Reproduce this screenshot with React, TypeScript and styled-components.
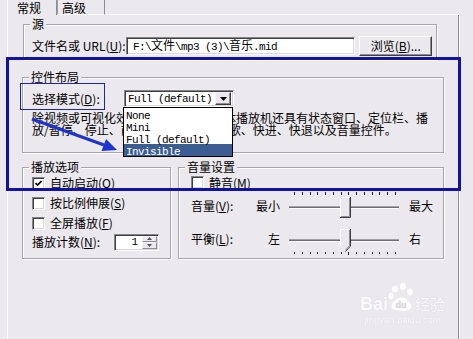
import React from "react";
import styled, { createGlobalStyle } from "styled-components";

const BG = "#ece9ee";

const GlobalStyle = createGlobalStyle`
  html, body {
    margin: 0;
    padding: 0;
    background: ${BG};
  }
  body {
    font-family: "Noto Sans CJK SC", "Liberation Sans", sans-serif;
    font-size: 12px;
    line-height: 12px;
    color: #000;
  }
`;

const Screen = styled.div`
  position: relative;
  width: 473px;
  height: 339px;
  overflow: hidden;
  background: ${BG};
`;

const TabStrip = styled.div`
  display: flex;
  width: 452px;
  height: 15px;
  margin-left: 7px;
`;

const Tab = styled.div<{ $active?: boolean }>`
  box-sizing: border-box;
  width: ${(p) => (p.$active ? 50 : 48)}px;
  height: 15px;
  padding: 1px 0 0 ${(p) => (p.$active ? 9 : 4)}px;
  line-height: 13px;
  border-left: 1px solid ${(p) => (p.$active ? "#fff" : "#9f9ea3")};
  border-right: 1px solid #8e8d92;
  border-bottom: ${(p) => (p.$active ? "none" : "1px solid #fff")};
`;

const TabFiller = styled.div`
  flex: 1;
  border-bottom: 1px solid #fff;
`;

const Panel = styled.div`
  box-sizing: border-box;
  width: 452px;
  height: 324px;
  margin-left: 7px;
  padding: 3px 0 0 14px;
  border-left: 1px solid #fff;
  border-right: 1px solid #8e8d92;
  box-shadow: 1px 0 0 #fff;
`;

const Group = styled.fieldset<{ $width: number; $pad: number; $top?: number; $shift?: number; $bottom: number }>`
  box-sizing: border-box;
  width: ${(p) => p.$width}px;
  min-inline-size: 0;
  margin: ${(p) => p.$top ?? 0}px 0 0 ${(p) => p.$shift ?? 0}px;
  padding: 0 4px ${(p) => p.$bottom}px ${(p) => p.$pad}px;
  border: 1px solid #a6a5ab;
  box-shadow: inset 1px 1px 0 #fff, 1px 1px 0 #fff;
`;

const Legend = styled.legend<{ $pad: number }>`
  margin-left: ${(p) => 6 - p.$pad}px;
  padding: 0 2px;
  line-height: 12px;
  background: ${BG};
`;

const FieldRow = styled.div`
  display: flex;
  align-items: center;
  height: 20px;
  margin-top: 6px;
`;

const FieldLabel = styled.span<{ $width: number }>`
  width: ${(p) => p.$width}px;
  flex: none;
  white-space: nowrap;
`;

const Sunken = styled.div`
  box-sizing: border-box;
  background: #fff;
  border: 1px solid;
  border-color: #86858a #fff #fff #86858a;
  box-shadow: inset 1px 1px 0 #3f3e42, inset -1px -1px 0 #d8d6da;
`;

const TextField = styled(Sunken)`
  width: 231px;
  height: 18px;
  display: flex;
  align-items: center;
  padding-left: 6px;
  white-space: nowrap;
`;

const Mono = styled.span`
  font-family: "Liberation Mono", "Noto Sans CJK SC", monospace;
  font-size: 11px;
  letter-spacing: -0.6px;
`;

const Wide = styled.span`
  font-family: "Noto Sans CJK SC", sans-serif;
  font-size: 12px;
  letter-spacing: 0;
`;

const PushButton = styled.div`
  box-sizing: border-box;
  width: 73px;
  height: 20px;
  margin-left: 4px;
  display: flex;
  align-items: center;
  justify-content: center;
  border: 1px solid;
  border-color: #fff #3f3e42 #3f3e42 #fff;
  box-shadow: inset -1px -1px 0 #8e8d92;
  white-space: nowrap;
`;

const SelectRow = styled.div`
  display: flex;
  align-items: center;
  height: 17px;
  margin-top: 7px;
`;

const Select = styled(Sunken)`
  position: relative;
  width: 110px;
  height: 17px;
  display: flex;
  align-items: center;
  justify-content: space-between;
  padding: 0 2px 0 3px;
`;

const ArrowButton = styled.div`
  box-sizing: border-box;
  width: 16px;
  height: 13px;
  display: flex;
  align-items: center;
  justify-content: center;
  background: ${BG};
  border: 1px solid;
  border-color: #f4f3f6 #3f3e42 #3f3e42 #f4f3f6;
  box-shadow: inset -1px -1px 0 #8e8d92;
`;

const DropList = styled.ul`
  position: absolute;
  z-index: 2;
  left: -2px;
  top: 16px;
  box-sizing: border-box;
  width: 110px;
  margin: 0;
  padding: 0;
  list-style: none;
  background: #fff;
  border: 1px solid #000;
`;

const DropItem = styled.li<{ $selected?: boolean }>`
  height: 12px;
  padding-left: 2px;
  line-height: 12px;
  background: ${(p) => (p.$selected ? "#3b5d92" : "#fff")};
  color: ${(p) => (p.$selected ? "#fff" : "#000")};
`;

const Description = styled.div`
  margin-top: 5px;
  white-space: nowrap;
`;

const BottomRow = styled.div`
  display: flex;
  gap: 7px;
  margin-top: 8px;
`;

const CheckRow = styled.div<{ $h?: number }>`
  display: flex;
  align-items: center;
  gap: 5px;
  height: ${(p) => p.$h ?? 20}px;
`;

const CheckBox = styled(Sunken)`
  width: 13px;
  height: 13px;
  flex: none;
  display: flex;
  align-items: center;
  justify-content: center;
`;

const SpinRow = styled.div`
  display: flex;
  align-items: center;
  height: 18px;
`;

const SpinBox = styled(Sunken)`
  width: 45px;
  height: 17px;
  display: flex;
  align-items: center;
  justify-content: flex-end;
  padding: 0 1px 0 0;
`;

const SpinValue = styled.span`
  margin-right: 4px;
  font-family: "Liberation Mono", monospace;
  font-size: 11px;
`;

const SpinButtons = styled.div`
  display: flex;
  flex-direction: column;
  width: 15px;
  height: 13px;
`;

const SpinHalf = styled.div`
  box-sizing: border-box;
  flex: 1;
  display: flex;
  align-items: center;
  justify-content: center;
  background: ${BG};
  border: 1px solid;
  border-color: #f4f3f6 #8e8d92 #8e8d92 #f4f3f6;
`;

const SliderRow = styled.div<{ $top?: number }>`
  display: flex;
  align-items: flex-start;
  margin-top: ${(p) => p.$top ?? 0}px;
`;

const SliderLabel = styled.span`
  width: 54px;
  margin-top: 8px;
  white-space: nowrap;
`;

const SliderMin = styled.span`
  width: 35px;
  margin: 8px 9px 0 0;
  text-align: right;
  white-space: nowrap;
`;

const SliderMax = styled.span`
  margin: 8px 0 0 10px;
  white-space: nowrap;
`;

const Track = styled.div<{ $h: number }>`
  position: relative;
  width: 110px;
  height: ${(p) => p.$h}px;
  display: flex;
  flex-direction: column;
`;

const Ticks = styled.div<{ $top: number }>`
  display: flex;
  justify-content: space-between;
  margin-top: ${(p) => p.$top}px;
  padding: 0 3px 0 5px;
`;

const Tick = styled.span<{ $h: number }>`
  width: 1px;
  height: ${(p) => p.$h}px;
  background: #1c1c1c;
`;

const Groove = styled.div<{ $top: number }>`
  height: 1px;
  margin-top: ${(p) => p.$top}px;
  background: #6f6e73;
  border-top: 1px solid #a3a2a7;
  border-bottom: 1px solid #fff;
`;

const Thumb = styled.svg<{ $left: number; $top: number }>`
  position: absolute;
  left: ${(p) => p.$left}px;
  top: ${(p) => p.$top}px;
`;

const Highlight = styled.div<{ $x: number; $y: number; $w: number; $h: number; $stroke: number; $color: string }>`
  position: absolute;
  left: ${(p) => p.$x}px;
  top: ${(p) => p.$y}px;
  width: ${(p) => p.$w}px;
  height: ${(p) => p.$h}px;
  box-sizing: border-box;
  border: ${(p) => p.$stroke}px solid ${(p) => p.$color};
  pointer-events: none;
`;

const ArrowLayer = styled.svg`
  position: absolute;
  left: 0;
  top: 0;
  pointer-events: none;
`;

const Watermark = styled.div`
  position: absolute;
  right: 28px;
  bottom: 13px;
  display: flex;
  flex-direction: column;
  align-items: center;
  color: rgba(255, 255, 255, 0.92);
  text-shadow: 0 0 1px rgba(120, 120, 130, 0.25);
  pointer-events: none;
`;

const MarkTop = styled.div`
  display: flex;
  align-items: flex-end;
  height: 30px;
`;

const MarkBai = styled.span`
  font-family: "Liberation Sans", sans-serif;
  font-weight: bold;
  font-size: 18px;
  line-height: 16px;
`;

const MarkJing = styled.span`
  font-size: 15px;
  line-height: 16px;
  margin-left: 1px;
`;

const MarkUrl = styled.span`
  font-family: "Liberation Sans", sans-serif;
  font-size: 9.5px;
  line-height: 12px;
  margin-top: 2px;
`;

const Check = () => (
  <svg width="7" height="7" viewBox="0 0 7 7">
    <path d="M0.5 3 L2.5 5 L6.5 1" stroke="#000" strokeWidth="1.6" fill="none" />
  </svg>
);

const Caret = ({ up }: { up?: boolean }) => (
  <svg width="7" height="4" viewBox="0 0 7 4">
    <path d={up ? "M3.5 0 L7 4 L0 4 Z" : "M0 0 L7 0 L3.5 4 Z"} fill="#000" />
  </svg>
);

const SmallCaret = ({ up }: { up?: boolean }) => (
  <svg width="5" height="3" viewBox="0 0 5 3">
    <path d={up ? "M2.5 0 L5 3 L0 3 Z" : "M0 0 L5 0 L2.5 3 Z"} fill="#555" />
  </svg>
);

const BoxThumb = () => (
  <Thumb $left={51} $top={5} width="11" height="21" viewBox="0 0 11 21">
    <rect x="0" y="0" width="11" height="21" fill={BG} />
    <path d="M0.5 20 V0.5 H10" stroke="#fff" fill="none" />
    <path d="M1 19.5 H9.5 V1" stroke="#8e8d92" fill="none" />
    <path d="M0 20.5 H10.5 V0" stroke="#3f3e42" fill="none" />
  </Thumb>
);

const PointThumb = () => (
  <Thumb $left={51} $top={4} width="11" height="23" viewBox="0 0 11 23">
    <path d="M0 0 H11 V17 L5.5 22.5 L0 17 Z" fill={BG} />
    <path d="M0.5 17 V0.5 H10" stroke="#fff" fill="none" />
    <path d="M10.5 0 V17 L5.5 22.5" stroke="#3f3e42" fill="none" />
    <path d="M9.5 1 V16.6 L5.5 21" stroke="#8e8d92" fill="none" />
  </Thumb>
);

const Paw = () => (
  <svg width="26" height="30" viewBox="0 0 26 30">
    <ellipse cx="7" cy="7" rx="3" ry="3.6" fill="rgba(255,255,255,0.92)" />
    <ellipse cx="15" cy="4.5" rx="3" ry="3.6" fill="rgba(255,255,255,0.92)" />
    <ellipse cx="22" cy="10" rx="2.8" ry="3.3" fill="rgba(255,255,255,0.92)" />
    <ellipse cx="3" cy="14" rx="2.6" ry="3.2" fill="rgba(255,255,255,0.92)" />
    <path d="M5 27 C2 25 4 19 9 17 C12 15 16 15 19 18 C24 21 25 27 20 28 C15 29 10 29 5 27 Z" fill="rgba(255,255,255,0.92)" />
    <text x="13" y="26" textAnchor="middle" fontFamily="Liberation Sans, sans-serif" fontWeight="bold" fontSize="9" fill="#d8d5dc">du</text>
  </svg>
);

const TICKS = Array.from({ length: 14 }, (_, i) => i);
const DOTS = Array.from({ length: 14 }, (_, i) => i);

export default function App() {
  return (
    <Screen>
      <GlobalStyle />
      <TabStrip>
        <Tab $active>常规</Tab>
        <Tab>高级</Tab>
        <TabFiller />
      </TabStrip>

      <Panel>
        <Group $width={414} $pad={8} $shift={1} $bottom={3}>
          <Legend $pad={8}>源</Legend>
          <FieldRow>
            <FieldLabel $width={94}>
              文件名或 URL(<u>U</u>):
            </FieldLabel>
            <TextField>
              <Mono>
                {"F:\\"}
                <Wide>文件</Wide>
                {"\\mp3 (3)\\"}
                <Wide>音乐</Wide>
                {".mid"}
              </Mono>
            </TextField>
            <PushButton>
              浏览(<u>B</u>)...
            </PushButton>
          </FieldRow>
        </Group>

        <Group $width={422} $pad={9} $top={11} $bottom={16}>
          <Legend $pad={9}>控件布局</Legend>
          <SelectRow>
            <FieldLabel $width={92}>
              选择模式(<u>D</u>):
            </FieldLabel>
            <Select>
              <Mono>Full (default)</Mono>
              <ArrowButton>
                <Caret />
              </ArrowButton>
              <DropList>
                <DropItem>
                  <Mono>None</Mono>
                </DropItem>
                <DropItem>
                  <Mono>Mini</Mono>
                </DropItem>
                <DropItem>
                  <Mono>Full (default)</Mono>
                </DropItem>
                <DropItem $selected>
                  <Mono>Invisible</Mono>
                </DropItem>
              </DropList>
            </Select>
          </SelectRow>
          <Description>
            <div>除视频或可视化效果外，该版本的媒体播放机还具有状态窗口、定位栏、播</div>
            <div>放/暂停、停止、前进、后退、上一首歌、快进、快退以及音量控件。</div>
          </Description>
        </Group>

        <BottomRow>
          <Group $width={149} $pad={9} $bottom={7}>
            <Legend $pad={9}>播放选项</Legend>
            <CheckRow>
              <CheckBox>
                <Check />
              </CheckBox>
              <span>
                自动启动(<u>O</u>)
              </span>
            </CheckRow>
            <CheckRow>
              <CheckBox />
              <span>
                按比例伸展(<u>S</u>)
              </span>
            </CheckRow>
            <CheckRow>
              <CheckBox />
              <span>
                全屏播放(<u>F</u>)
              </span>
            </CheckRow>
            <SpinRow>
              <FieldLabel $width={82}>
                播放计数(<u>N</u>):
              </FieldLabel>
              <SpinBox>
                <SpinValue>1</SpinValue>
                <SpinButtons>
                  <SpinHalf>
                    <SmallCaret up />
                  </SpinHalf>
                  <SpinHalf>
                    <SmallCaret />
                  </SpinHalf>
                </SpinButtons>
              </SpinBox>
            </SpinRow>
          </Group>

          <Group $width={266} $pad={12} $bottom={2}>
            <Legend $pad={12}>音量设置</Legend>
            <CheckRow $h={19}>
              <CheckBox />
              <span>
                静音(<u>M</u>)
              </span>
            </CheckRow>
            <SliderRow>
              <SliderLabel>
                音量(<u>V</u>):
              </SliderLabel>
              <SliderMin>最小</SliderMin>
              <Track $h={28}>
                <Ticks $top={0}>
                  {TICKS.map((i) => (
                    <Tick key={i} $h={3} />
                  ))}
                </Ticks>
                <Groove $top={11} />
                <BoxThumb />
              </Track>
              <SliderMax>最大</SliderMax>
            </SliderRow>
            <SliderRow $top={5}>
              <SliderLabel>
                平衡(<u>L</u>):
              </SliderLabel>
              <SliderMin>左</SliderMin>
              <Track $h={31}>
                <Groove $top={14} />
                <Ticks $top={10}>
                  {DOTS.map((i) => (
                    <Tick key={i} $h={i === 7 ? 3 : 2} />
                  ))}
                </Ticks>
                <PointThumb />
              </Track>
              <SliderMax>右</SliderMax>
            </SliderRow>
          </Group>
        </BottomRow>
      </Panel>

      <Highlight $x={6} $y={57} $w={455} $h={134} $stroke={3} $color="#1313a3" />
      <Highlight $x={20} $y={83} $w={85} $h={27} $stroke={1} $color="#25259a" />
      <ArrowLayer width="473" height="339" viewBox="0 0 473 339">
        <line x1="32" y1="119" x2="104" y2="145" stroke="#1f33d0" strokeWidth="3" />
        <polygon points="117,150 101.5,151 106,139" fill="#1f33d0" />
      </ArrowLayer>

      <Watermark>
        <MarkTop>
          <MarkBai>Bai</MarkBai>
          <Paw />
          <MarkJing>经验</MarkJing>
        </MarkTop>
        <MarkUrl>jingyan.baidu.com</MarkUrl>
      </Watermark>
    </Screen>
  );
}
